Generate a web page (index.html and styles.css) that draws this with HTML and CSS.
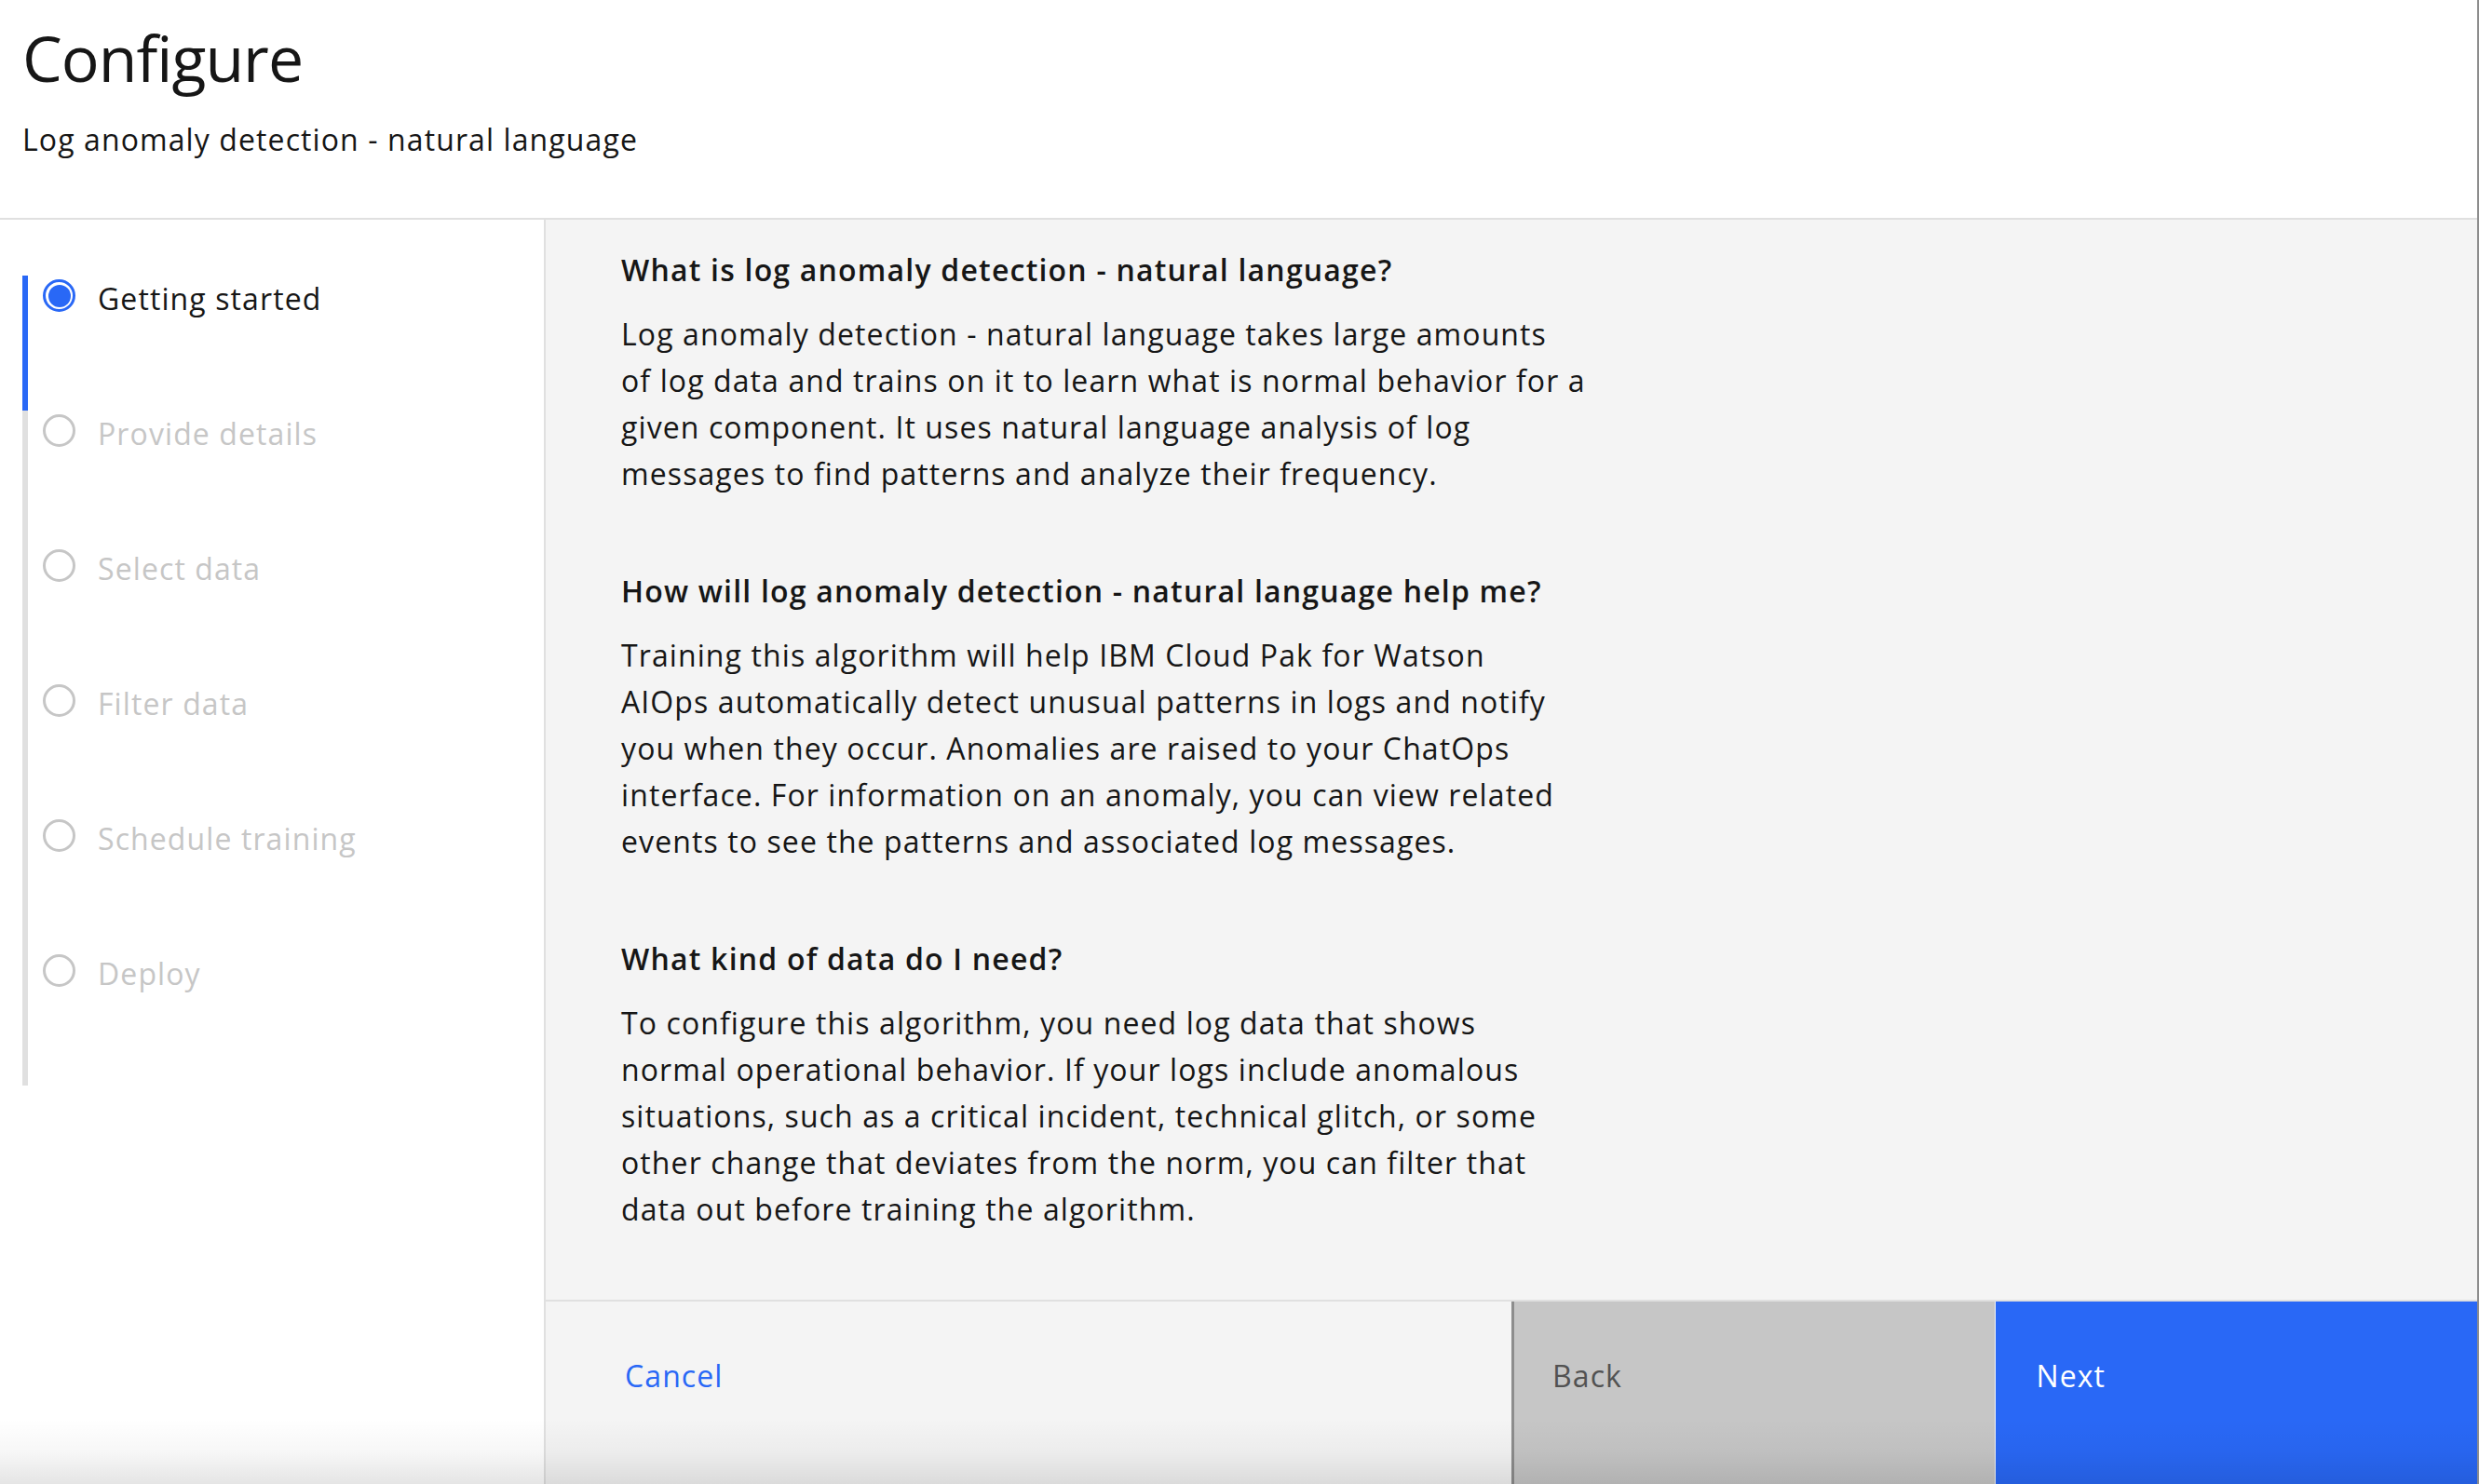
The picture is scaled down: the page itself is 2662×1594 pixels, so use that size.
FILE: index.html
```html
<!DOCTYPE html>
<html lang="en">
<head>
<meta charset="utf-8">
<title>Configure</title>
<link rel="stylesheet" href="styles.css">
</head>
<body>
<div class="page">
  <header class="header">
    <h1 class="title">Configure</h1>
    <p class="subtitle">Log anomaly detection - natural language</p>
  </header>
  <div class="body">
    <nav class="sidebar">
      <ol class="steps">
        <li class="step step-current"><span class="dot"></span><span class="label">Getting started</span></li>
        <li class="step"><span class="dot"></span><span class="label">Provide details</span></li>
        <li class="step"><span class="dot"></span><span class="label">Select data</span></li>
        <li class="step"><span class="dot"></span><span class="label">Filter data</span></li>
        <li class="step"><span class="dot"></span><span class="label">Schedule training</span></li>
        <li class="step"><span class="dot"></span><span class="label">Deploy</span></li>
      </ol>
    </nav>
    <main class="main">
      <div class="content">
        <section class="section">
          <h2 class="heading">What is log anomaly detection - natural language?</h2>
          <p class="text">Log anomaly detection - natural language takes large amounts<br>of log data and trains on it to learn what is normal behavior for a<br>given component. It uses natural language analysis of log<br>messages to find patterns and analyze their frequency.</p>
        </section>
        <section class="section">
          <h2 class="heading">How will log anomaly detection - natural language help me?</h2>
          <p class="text">Training this algorithm will help IBM Cloud Pak for Watson<br>AIOps automatically detect unusual patterns in logs and notify<br>you when they occur. Anomalies are raised to your ChatOps<br>interface. For information on an anomaly, you can view related<br>events to see the patterns and associated log messages.</p>
        </section>
        <section class="section">
          <h2 class="heading">What kind of data do I need?</h2>
          <p class="text">To configure this algorithm, you need log data that shows<br>normal operational behavior. If your logs include anomalous<br>situations, such as a critical incident, technical glitch, or some<br>other change that deviates from the norm, you can filter that<br>data out before training the algorithm.</p>
        </section>
      </div>
      <footer class="footer">
        <div class="cancel-cell"><a class="cancel" href="#">Cancel</a></div>
        <button class="btn btn-back" type="button">Back</button>
        <button class="btn btn-next" type="button">Next</button>
      </footer>
    </main>
  </div>
  <div class="shade"></div>
</div>
</body>
</html>
```

FILE: styles.css
```css
* { box-sizing: border-box; }

html, body {
  margin: 0;
  padding: 0;
  height: 100%;
}

body {
  font-family: "Open Sans", "Noto Sans", "Liberation Sans", sans-serif;
  color: #161616;
  background: #ffffff;
  overflow: hidden;
}

.page {
  position: relative;
  width: 2662px;
  height: 1594px;
  display: flex;
  flex-direction: column;
  border-right: 2px solid #8d8d8d;
}

.header {
  height: 236px;
  flex: none;
  padding: 22px 0 0 24px;
  border-bottom: 2px solid #e0e0e0;
  background: #ffffff;
}

.title {
  margin: 0;
  font-size: 68px;
  line-height: 80px;
  font-weight: 400;
  letter-spacing: -1px;
  color: #161616;
}

.subtitle {
  margin: 23px 0 0;
  font-size: 32px;
  line-height: 50px;
  letter-spacing: 1.1px;
  color: #161616;
}

.body {
  flex: 1;
  display: flex;
  min-height: 0;
}

.sidebar {
  width: 586px;
  flex: none;
  border-right: 2px solid #e0e0e0;
  background: #ffffff;
  padding-top: 60px;
}

.steps {
  list-style: none;
  margin: 0 0 0 24px;
  padding: 0;
}

.step {
  height: 145px;
  display: flex;
  align-items: flex-start;
  border-left: 6px solid #e0e0e0;
  padding-left: 16px;
}

.step-current {
  border-left-color: #2968f6;
}

.dot {
  width: 35px;
  height: 35px;
  flex: none;
  margin-top: 4px;
  border-radius: 50%;
  border: 3px solid #c6c6c6;
}

.step-current .dot {
  border-color: #2968f6;
  padding: 2.5px;
  background: #2968f6;
  background-clip: content-box;
}

.label {
  margin-left: 24px;
  font-size: 32px;
  line-height: 50px;
  letter-spacing: 1.1px;
  color: #c6c6c6;
  white-space: nowrap;
}

.step-current .label {
  color: #161616;
}

.main {
  flex: 1;
  display: flex;
  flex-direction: column;
  background: #f4f4f4;
  min-width: 0;
}

.content {
  flex: 1;
  min-height: 0;
  overflow: hidden;
  padding: 29px 0 0 81px;
}

.section {
  width: 1100px;
  margin-bottom: 76px;
}

.section:last-child {
  margin-bottom: 0;
}

.heading {
  margin: 0 0 19px;
  font-size: 32px;
  line-height: 50px;
  font-weight: 600;
  letter-spacing: 1.2px;
  color: #161616;
  white-space: nowrap;
}

.text {
  margin: 0;
  font-size: 32px;
  line-height: 50px;
  letter-spacing: 1.1px;
  color: #161616;
  white-space: nowrap;
}

.footer {
  height: 198px;
  flex: none;
  display: grid;
  grid-template-columns: 2fr 1fr 1fr;
  border-top: 2px solid #e0e0e0;
}

.cancel-cell {
  padding: 55px 0 0 85px;
}

.cancel {
  font-size: 32px;
  line-height: 50px;
  letter-spacing: 1.1px;
  color: #2968f6;
  text-decoration: none;
}

.btn {
  border: 0;
  margin: 0;
  display: flex;
  align-items: flex-start;
  justify-content: flex-start;
  text-align: left;
  font-family: inherit;
  font-size: 32px;
  line-height: 50px;
  letter-spacing: 1.1px;
  padding: 55px 0 0 44px;
  height: 100%;
}

.btn-back {
  background: #c6c6c6;
  color: #525252;
  border-left: 3px solid #8d8d8d;
  padding-left: 41px;
}

.btn-next {
  background: #2968f6;
  color: #ffffff;
  margin-left: 1px;
}

.shade {
  position: absolute;
  left: 0;
  right: 0;
  bottom: 0;
  height: 70px;
  pointer-events: none;
  background: linear-gradient(to bottom, rgba(0, 0, 0, 0) 0%, rgba(0, 0, 0, 0.03) 50%, rgba(0, 0, 0, 0.1) 100%);
}
```
